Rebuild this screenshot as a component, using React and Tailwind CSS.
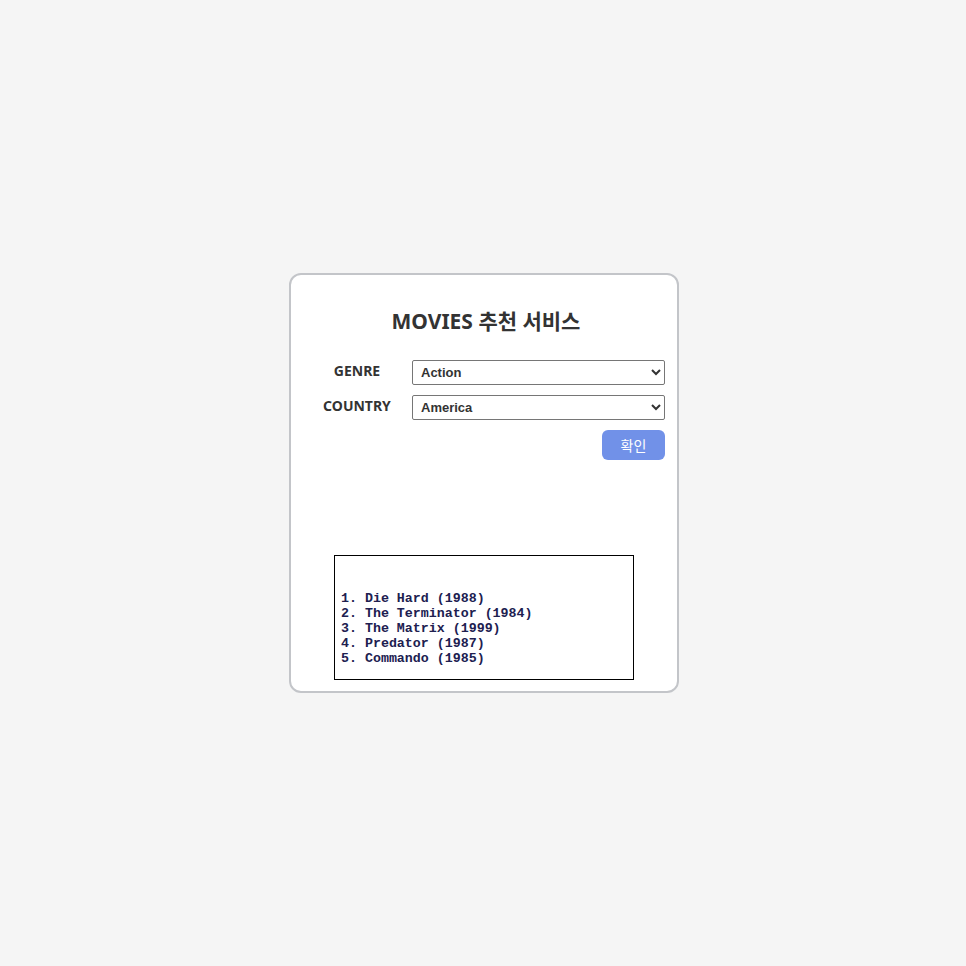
import { useState } from 'react';

const movies = [
  '1. Die Hard (1988)',
  '2. The Terminator (1984)',
  '3. The Matrix (1999)',
  '4. Predator (1987)',
  '5. Commando (1985)',
];

export default function App() {
  const [genre, setGenre] = useState('Action');
  const [country, setCountry] = useState('America');

  return (
    <div className="min-h-screen bg-[#f5f5f5] flex items-center justify-center font-['Noto_Sans','Noto_Sans_CJK_KR',sans-serif]">
      {/* Card */}
      <div className="w-[390px] h-[420px] bg-white border-2 border-[#c3c5c9] rounded-[12px] pt-[32px] pl-[14px] pr-[12px] flex flex-col ml-[2px]">
        <h1 className="text-center text-[21px] leading-[28px] font-bold text-[#333] pl-[2px]">MOVIES 추천 서비스</h1>

        <div className="mt-[25px] ml-[1px] flex flex-col gap-[10px]">
          <div className="flex items-center">
            <label className="w-[102px] shrink-0 text-center text-[14px] font-bold text-[#333] pb-[4px]">GENRE</label>
            <select
              value={genre}
              onChange={(e) => setGenre(e.target.value)}
              className="ml-[4px] w-[253px] shrink-0 h-[25px] border border-[#767676] rounded-[2px] px-[4px] text-[13px] font-bold text-[#333] bg-white font-['Liberation_Sans',sans-serif]"
            >
              <option>Action</option>
              <option>Comedy</option>
              <option>Drama</option>
            </select>
          </div>
          <div className="flex items-center">
            <label className="w-[102px] shrink-0 text-center text-[14px] font-bold text-[#333] pb-[4px]">COUNTRY</label>
            <select
              value={country}
              onChange={(e) => setCountry(e.target.value)}
              className="ml-[4px] w-[253px] shrink-0 h-[25px] border border-[#767676] rounded-[2px] px-[4px] text-[13px] font-bold text-[#333] bg-white font-['Liberation_Sans',sans-serif]"
            >
              <option>America</option>
              <option>Korea</option>
              <option>Japan</option>
            </select>
          </div>
        </div>

        <div className="flex justify-end mt-[10px]">
          <button className="w-[63px] h-[30px] rounded-[6px] bg-[#7191e8] text-white text-[14px]">확인</button>
        </div>

        {/* Result */}
        <div className="mt-auto mb-[11px] self-center w-[300px] h-[125px] border border-black pt-[35px] px-[6px] mr-[2px]">
          <pre className="font-['Liberation_Mono',monospace] text-[13.3px] leading-[15px] text-[#202050] font-bold">
            {movies.join('\n')}
          </pre>
        </div>
      </div>
    </div>
  );
}
